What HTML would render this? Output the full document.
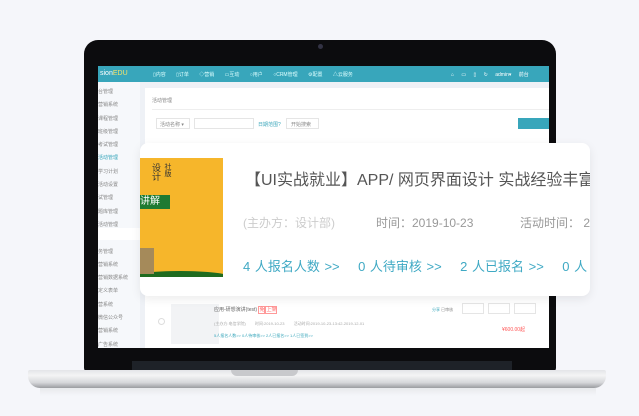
<!DOCTYPE html>
<html><head><meta charset="utf-8"><style>
*{margin:0;padding:0;box-sizing:border-box}
body{width:639px;height:416px;background:#f5f6fa;position:relative;overflow:hidden;font-family:"Liberation Sans","Noto Sans CJK SC",sans-serif}
.a{position:absolute}
.t{font-size:5px;color:#888;white-space:nowrap}
</style></head><body>
<!-- bezel -->
<div class="a" style="left:84px;top:40px;width:472px;height:332px;background:#0c0c0e;border-radius:14px 14px 4px 4px"></div>
<div class="a" style="left:318px;top:44px;width:5px;height:5px;border-radius:50%;background:#334"></div>
<div class="a" style="left:132px;top:361px;width:380px;height:9px;background:#1e2228"></div>
<!-- base -->
<div class="a" style="left:28px;top:370px;width:578px;height:18px;border-radius:2px 2px 12px 12px;background:linear-gradient(#e4e5e8,#f4f4f5 30%,#d6d7da 70%,#9a9ca0)"></div>
<div class="a" style="left:231px;top:370px;width:67px;height:6px;border-radius:0 0 6px 6px;background:#c8c9cc"></div>
<div class="a" style="left:40px;top:388px;width:556px;height:8px;background:linear-gradient(#e8e9ec,#f5f6fa)"></div>
<!-- screen -->
<div class="a" style="left:98px;top:66px;width:451px;height:282px;background:#eef1f6;overflow:hidden">
 <div class="a" style="left:0;top:0;width:451px;height:16px;background:#38a6bb"></div>
 <div class="a" style="left:2px;top:4px;font-size:7px;color:#fff">sion<span style="color:#f5e36a">EDU</span></div>
 <div class="a" style="left:55px;top:5px;font-size:5px;color:#dff;word-spacing:9px;white-space:nowrap">▯内容 ▯订单 ◇营销 ▭互动 ○用户 ○CRM管理 ⚙配置 △云服务</div>
 <div class="a" style="left:353px;top:5px;font-size:5px;color:#fff;word-spacing:6px;white-space:nowrap">⌂ ▭ ▯ ↻ admin▾ 前台</div>
 <div class="a" style="left:0;top:16px;width:42px;height:266px;background:#f6f8fb"></div>
 <div class="a" style="left:0;top:162px;width:42px;height:12px;background:#fff"></div>
 <div class="a t" style="left:0;top:20px;line-height:13.3px">台管理<br>营销系统<br>课程管理<br>班级管理<br>考试管理<br><span style="color:#38a6bb">活动管理</span><br>学习计划<br>活动设置<br>试管理<br>题库管理<br>活动管理<br><br>务管理<br>营销系统<br>营销数据系统<br>定义表单<br>营系统<br>微信公众号<br>营销系统<br>广告系统</div>
 <div class="a" style="left:47px;top:22px;width:404px;height:260px;background:#fff"></div>
 <div class="a t" style="left:54px;top:31px">活动管理</div>
 <div class="a" style="left:54px;top:43px;width:397px;height:1px;background:#eee"></div>
 <div class="a" style="left:58px;top:52px;width:34px;height:11px;border:1px solid #e5e5e5"></div>
 <div class="a t" style="left:62px;top:55px">活动名称 ▾</div>
 <div class="a" style="left:96px;top:52px;width:60px;height:11px;border:1px solid #e5e5e5"></div>
 <div class="a t" style="left:160px;top:55px;color:#38a6bb">日期范围?</div>
 <div class="a" style="left:188px;top:52px;width:33px;height:11px;border:1px solid #e5e5e5"></div>
 <div class="a t" style="left:193px;top:55px">开始搜索</div>
 <div class="a" style="left:420px;top:52px;width:31px;height:11px;background:#38a6bb"></div>
 <!-- lower row -->
 <div class="a" style="left:60px;top:252px;width:7px;height:7px;border:1px solid #ddd;border-radius:50%"></div>
 <div class="a" style="left:73px;top:238px;width:48px;height:40px;background:#f2f3f5"></div>
 <div class="a t" style="left:116px;top:240px;color:#666">应用-研想演讲(test) <span style="color:#f66;border:1px solid #f99">免</span><span style="color:#f66;border:1px solid #f99">上架</span></div>
 <div class="a t" style="left:116px;top:255px;font-size:4px;color:#aaa;word-spacing:8px">(主办方:电信学院) 时间:2019-10-23 活动时间:2019-10-23-13:42-2019-12-01</div>
 <div class="a t" style="left:116px;top:267px;font-size:4px;color:#38a6bb">5人报名人数&gt;&gt; 0人待审核&gt;&gt; 2人已报名&gt;&gt; 1人已签到&gt;&gt;</div>
 <div class="a t" style="left:334px;top:241px;font-size:4px"><span style="color:#38a6bb">分享</span> 已审核</div>
 <div class="a" style="left:364px;top:237px;width:22px;height:11px;border:1px solid #e5e5e5"></div>
 <div class="a" style="left:390px;top:237px;width:22px;height:11px;border:1px solid #e5e5e5"></div>
 <div class="a" style="left:416px;top:237px;width:22px;height:11px;border:1px solid #e5e5e5"></div>
 <div class="a t" style="left:404px;top:260px;color:#f55">¥600.00起</div>
</div>
<!-- card -->
<div class="a" style="left:140px;top:143px;width:450px;height:153px;background:#fff;border-radius:8px;box-shadow:0 3px 10px rgba(0,0,0,.08);overflow:hidden">
 <div class="a" style="left:0;top:15px;width:83px;height:119px;background:#f6b62b;overflow:hidden">
  <div class="a" style="left:0;top:37px;width:30px;height:14px;background:#1f7a32;color:#fff;font-size:10px;line-height:14px">讲解</div>
  <div class="a" style="left:10px;top:5px;font-size:9px;color:#333;writing-mode:vertical-rl;height:30px">设计</div>
  <div class="a" style="left:22px;top:5px;font-size:7px;color:#333;writing-mode:vertical-rl">社版</div>
  <div class="a" style="left:-10px;top:113px;width:100px;height:12px;background:#1f6b1f;border-radius:50% 50% 0 0"></div>
  <div class="a" style="left:0;top:90px;width:14px;height:26px;background:#a58a5a"></div>
 </div>
 <div class="a" style="left:105px;top:23px;font-size:16px;color:#555;white-space:nowrap">【UI实战就业】APP/ 网页界面设计 实战经验丰富</div>
 <div class="a" style="left:103px;top:71px;font-size:12px;color:#ccc;white-space:nowrap">(主办方：设计部)</div>
 <div class="a" style="left:236px;top:71px;font-size:12px;color:#999;white-space:nowrap">时间：2019-10-23</div>
 <div class="a" style="left:380px;top:71px;font-size:12px;color:#999;white-space:nowrap">活动时间： 2</div>
 <div class="a" style="left:103px;top:113px;font-size:13px;color:#3fa9c4;white-space:nowrap;word-spacing:1px">4 人报名人数 &gt;&gt; &nbsp;&nbsp; 0 人待审核 &gt;&gt; &nbsp;&nbsp; 2 人已报名 &gt;&gt; &nbsp;&nbsp; 0 人</div>
</div>
</body></html>
